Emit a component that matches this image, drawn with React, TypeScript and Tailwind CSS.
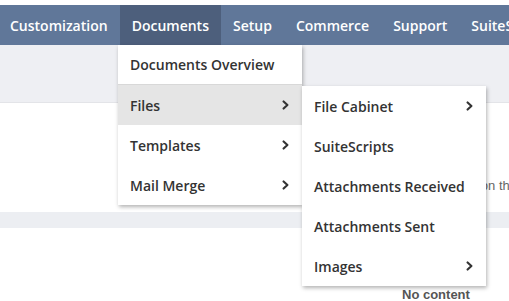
const navItems = ["Customization", "Documents", "Setup", "Commerce", "Support", "SuiteScript"];

const mainMenu = [
  { label: "Documents Overview", sub: false },
  { label: "Files", sub: true, active: true },
  { label: "Templates", sub: true },
  { label: "Mail Merge", sub: true },
];

const filesMenu = [
  { label: "File Cabinet", sub: true },
  { label: "SuiteScripts", sub: false },
  { label: "Attachments Received", sub: false },
  { label: "Attachments Sent", sub: false },
  { label: "Images", sub: true },
];

function Chevron() {
  return (
    <svg width="7" height="10" viewBox="0 0 7 10" className="text-[#333]">
      <path d="M1.6 1.4 L5.4 5 L1.6 8.6" fill="none" stroke="currentColor" strokeWidth="2.1" strokeLinecap="round" strokeLinejoin="round" />
    </svg>
  );
}

export default function App() {
  return (
    <div className="relative h-[301px] w-[509px] overflow-hidden bg-white font-['Open_Sans',sans-serif]">
      {/* Top nav */}
      <div className="mt-[5px] flex h-10 items-stretch whitespace-nowrap bg-[#607799]">
        <div className="-ml-[2px] flex">
          {navItems.map((item) => (
            <div
              key={item}
              className={`flex items-center px-3 text-[14px] font-semibold text-white ${
                item === "Documents" ? "bg-[#4d5f7c]" : ""
              }`}
            >
              {item}
            </div>
          ))}
        </div>
      </div>

      {/* Page body behind the menu */}
      <div className="h-[57px] bg-[#eeeff3]"></div>
      <div className="flex h-[110px] items-end justify-end border-t border-[#e3e4e8] pb-[17px]">
        <span className="-mr-[8px] whitespace-nowrap font-['Liberation_Sans',sans-serif] text-[13px] text-[#666]">on the</span>
      </div>
      <div className="h-4 bg-[#eceef2]"></div>
      <div className="flex h-[72px] items-end pl-[402px]">
        <span className="translate-y-[4px] font-['Liberation_Sans',sans-serif] text-[13px] font-bold text-[#555]">
          No content
        </span>
      </div>

      {/* Documents dropdown */}
      <div className="absolute left-[118px] top-[45px] w-[184px] bg-white shadow-[1px_2px_4px_rgba(0,0,0,0.3)]">
        {mainMenu.map((m, i) => (
          <div
            key={m.label}
            className={`flex h-10 items-center justify-between pl-3 pr-[13px] text-[14px] font-semibold text-[#333] ${
              m.active ? "bg-[#e5e5e5]" : ""
            } ${i === 0 ? "border-b border-[#d8d8d8]" : ""}`}
          >
            <span>{m.label}</span>
            {m.sub && <Chevron />}
          </div>
        ))}
      </div>

      {/* Files submenu */}
      <div className="absolute left-[302px] top-[86px] w-[184px] bg-white shadow-[1px_2px_4px_rgba(0,0,0,0.3)]">
        {filesMenu.map((m) => (
          <div
            key={m.label}
            className="flex h-10 items-center justify-between pl-3 pr-[13px] text-[14px] font-semibold text-[#333]"
          >
            <span>{m.label}</span>
            {m.sub && <Chevron />}
          </div>
        ))}
      </div>
    </div>
  );
}
